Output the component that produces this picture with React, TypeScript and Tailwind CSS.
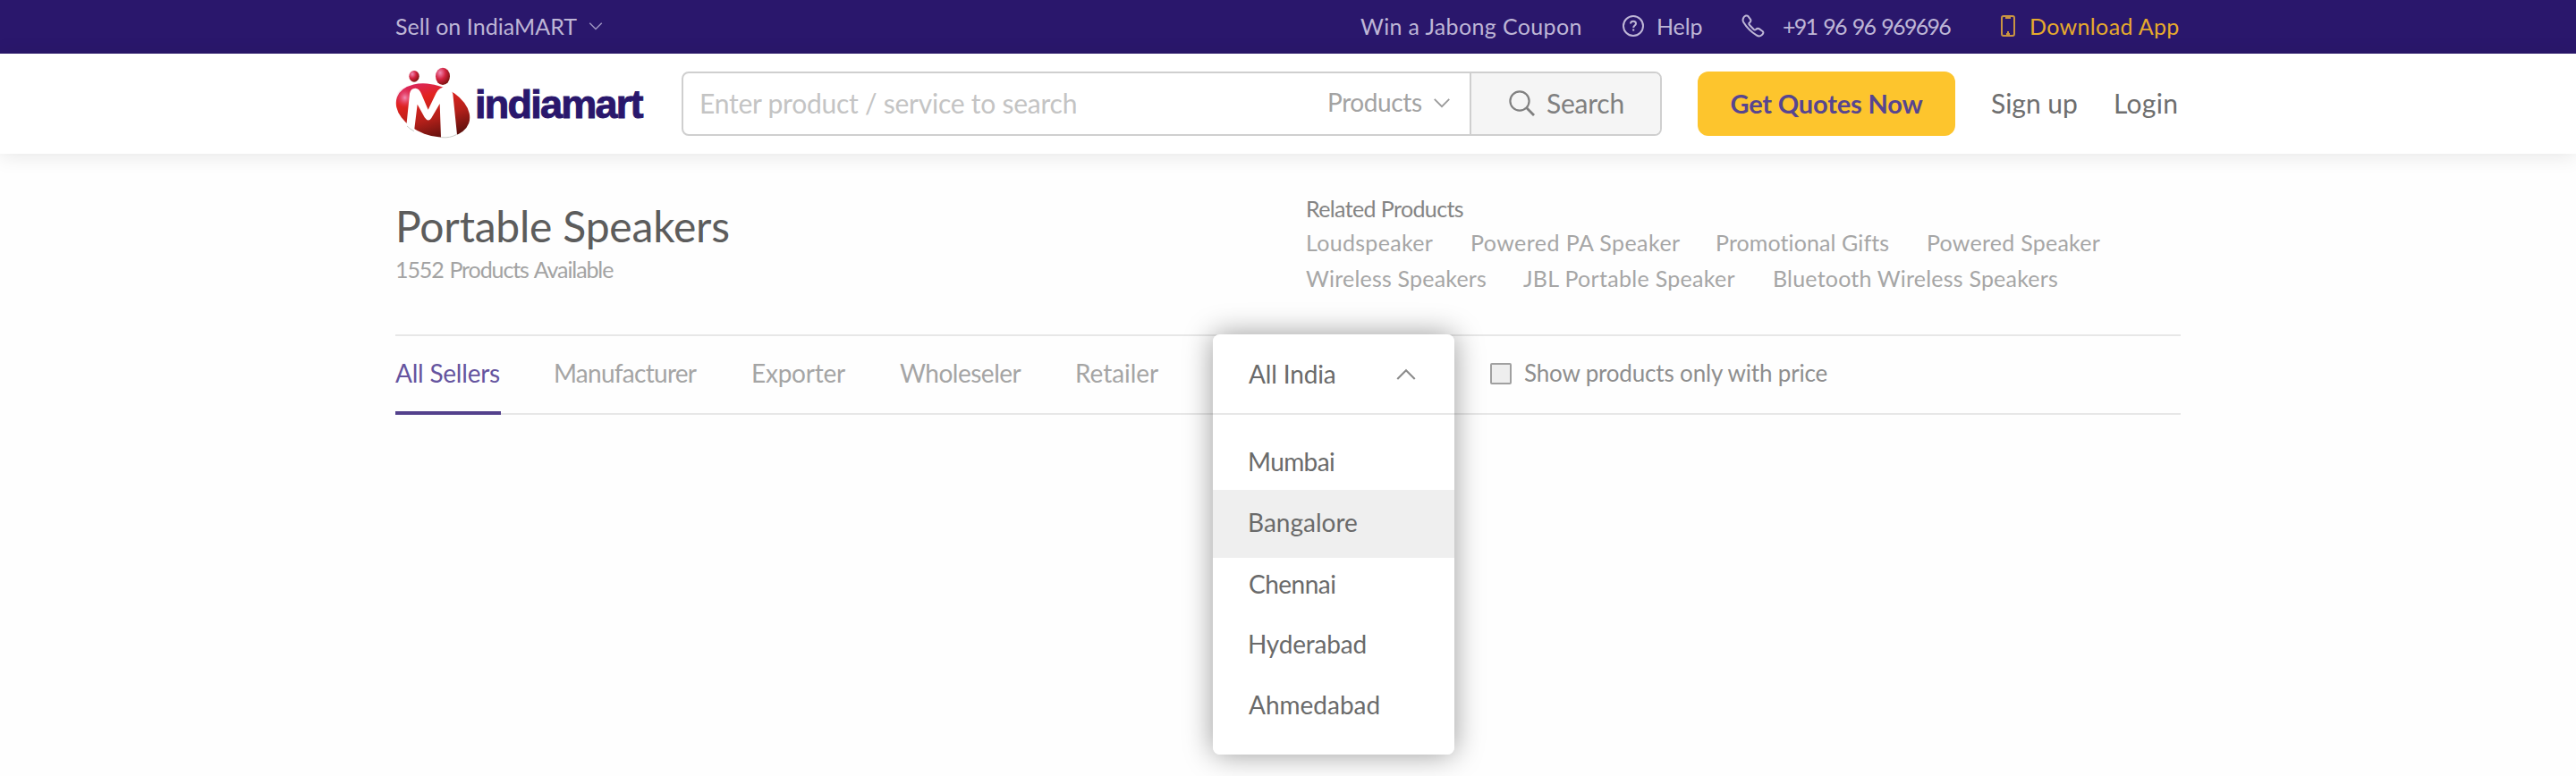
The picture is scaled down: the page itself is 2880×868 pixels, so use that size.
import type { ReactNode } from "react";

function Chevron({ className, up = false }: { className: string; up?: boolean }) {
  return (
    <svg viewBox="0 0 20 12" fill="none" stroke="currentColor" strokeWidth="2" className={className}>
      <path d={up ? "M1 11 L10 2 L19 11" : "M1 1 L10 10 L19 1"} />
    </svg>
  );
}

function Logo() {
  return (
    <svg viewBox="0 0 270 264" className="mb-[4px] h-[88px] w-[90px] shrink-0">
      <defs>
        <linearGradient id="body" x1="0.1" y1="0.1" x2="0.9" y2="0.8">
          <stop offset="0" stopColor="#d9286a" />
          <stop offset="0.3" stopColor="#e2231f" />
          <stop offset="0.65" stopColor="#b3201a" />
          <stop offset="1" stopColor="#5a0f0c" />
        </linearGradient>
        <radialGradient id="glow" cx="0.5" cy="0.5" r="0.5">
          <stop offset="0" stopColor="#f59ac4" stopOpacity="0.9" />
          <stop offset="1" stopColor="#e0306a" stopOpacity="0" />
        </radialGradient>
        <radialGradient id="head" cx="0.32" cy="0.3" r="0.75">
          <stop offset="0" stopColor="#f08bb4" />
          <stop offset="0.5" stopColor="#d2223f" />
          <stop offset="1" stopColor="#7c130f" />
        </radialGradient>
      </defs>
      <ellipse cx="138" cy="160" rx="128" ry="84" transform="rotate(20 138 160)" fill="url(#body)" />
      <ellipse cx="44" cy="118" rx="30" ry="34" fill="url(#glow)" />
      <path
        d="M49 212 L60 104 Q63 86 79 86 Q92 87 98 102 L122 158 L149 102 Q160 82 180 82 Q200 84 205 106 L219 242 Q196 256 165 251 L161 138 L133 186 Q122 202 110 184 L86 140 L75 230 Q62 224 49 212 Z"
        fill="#fff"
      />
      <path d="M51 213 Q62 224 75 230 M166 251 Q196 254 218 241" fill="none" stroke="#c9cdc9" strokeWidth="3" />
      <ellipse cx="75" cy="46" rx="17" ry="19" fill="url(#head)" />
      <ellipse cx="171" cy="46" rx="24" ry="29" fill="url(#head)" />
    </svg>
  );
}

function HelpIcon() {
  return (
    <svg viewBox="0 0 24 24" fill="none" stroke="currentColor" strokeWidth="2" className="ml-[44px] h-6 w-6 shrink-0">
      <circle cx="12" cy="12" r="11" />
      <path d="M9 9.6 C9 7.6 10.4 6.8 12 6.8 C13.7 6.8 15 7.8 15 9.4 C15 11.5 12.2 11.6 12.2 14" />
      <path d="M12.2 15.4 V17.6" />
    </svg>
  );
}

function PhoneIcon() {
  return (
    <svg
      viewBox="0 0 26 26"
      fill="none"
      stroke="currentColor"
      strokeWidth="2"
      strokeLinejoin="round"
      className="ml-[44px] h-[26px] w-[26px] shrink-0"
    >
      <path d="M2.4 3.6 C3.6 1.6 6.2 0.6 7.4 2.2 L10 5.6 C11 7.2 10.4 8.4 8.8 9.6 C8 10.3 8.2 10.9 8.8 11.8 L13.6 16.8 C14.5 17.6 15.2 17.7 16 17 C17.2 15.9 18.6 15.4 20 16.4 L23.6 19 C25 20.2 24.4 21.8 22.6 23.2 C20.8 24.8 18.6 24.6 16.8 23.4 C10.6 19.6 5.4 14.2 2.2 8.8 C1.2 7 1.4 5.2 2.4 3.6 Z" />
    </svg>
  );
}

function MobileIcon() {
  return (
    <svg viewBox="0 0 16 24" fill="none" stroke="currentColor" strokeWidth="2" className="ml-[56px] h-6 w-4 shrink-0 text-[#c99442]">
      <rect x="1" y="1" width="14" height="22" rx="2" />
      <path d="M5 3 H11 M8 18 V22 M6 21 H10" />
    </svg>
  );
}

function SearchIcon() {
  return (
    <svg viewBox="0 0 29 29" fill="none" stroke="currentColor" strokeWidth="2.2" className="ml-[42px] h-[29px] w-[29px] shrink-0">
      <circle cx="12" cy="12" r="10.6" />
      <path d="M19.6 19.6 L28 28" strokeWidth="2.8" />
    </svg>
  );
}

function Text({ className, children }: { className: string; children: ReactNode }) {
  return <span className={`block shrink-0 leading-none whitespace-nowrap ${className}`}>{children}</span>;
}

function TopBar() {
  return (
    <div className="flex h-[60px] justify-center bg-[#2a176c] text-[25px] text-[#beb6d6]">
      <div className="flex h-[58px] w-[1996px] items-center">
        <Text className="w-[203px] tracking-[0.05px]">Sell on IndiaMART</Text>
        <Chevron className="ml-[13px] h-[9px] w-4 text-[#9d94c2]" />
        <Text className="ml-[847px] w-[249px] tracking-[0.36px]">Win a Jabong Coupon</Text>
        <HelpIcon />
        <Text className="ml-[14px] w-[51px] tracking-[-0.1px]">Help</Text>
        <PhoneIcon />
        <Text className="ml-[20px] w-[188px] tracking-[-1.7px] [word-spacing:2.2px]">+91 96 96 969696</Text>
        <MobileIcon />
        <Text className="ml-[16px] tracking-[0.36px] text-[#e6aa2c]">Download App</Text>
      </div>
    </div>
  );
}

function Header() {
  return (
    <header className="relative flex h-[112px] justify-center bg-white shadow-[0_2px_22px_rgba(0,0,0,0.1)]">
      <div className="flex w-[1996px] items-center">
        <div className="-ml-[4px] flex h-[88px] w-[324px] items-center">
          <Logo />
          <Text className="ml-[3px] font-['Liberation_Sans',sans-serif] text-[45px] font-bold tracking-[-1.75px] text-[#2a176c] [-webkit-text-stroke:1px_#2a176c]">
            indiamart
          </Text>
        </div>
        <div className="flex h-[72px] w-[1096px] overflow-hidden rounded-lg border-2 border-[#cfcfcf]">
          <div className="flex flex-1 items-center pb-[2px]">
            <Text className="ml-[18px] w-[700px] text-[30px] tracking-[-0.24px] text-[#c4c4c4]">
              Enter product / service to search
            </Text>
            <Text className="ml-[2px] w-[108px] pb-[2px] text-[28px] tracking-[-0.4px] text-[#a3a3a3]">Products</Text>
            <Chevron className="ml-[10px] h-[11px] w-5 text-[#9a9a9a]" />
          </div>
          <div className="flex w-[213px] items-center border-l-2 border-[#cfcfcf] bg-[#f5f5f5] pb-[2px] text-[#808080]">
            <SearchIcon />
            <Text className="ml-[13px] text-[30px] tracking-[-0.22px]">Search</Text>
          </div>
        </div>
        <div className="ml-[40px] flex h-[72px] w-[288px] items-center justify-center rounded-xl bg-[#fdc52d] pb-[2px]">
          <Text className="text-[29px] font-bold tracking-[-0.18px] text-[#574590]">Get Quotes Now</Text>
        </div>
        <Text className="ml-[40px] w-[98px] pb-[2px] text-[30px] text-[#6e6e6e]">Sign up</Text>
        <Text className="ml-[39px] pb-[2px] text-[30px] tracking-[0.3px] text-[#6e6e6e]">Login</Text>
      </div>
    </header>
  );
}

function Heading() {
  return (
    <section className="flex h-[202px] justify-between">
      <div className="pt-[57px]">
        <Text className="text-[48px] tracking-[-0.2px] text-[#5c5c5c]">Portable Speakers</Text>
        <Text className="mt-[12px] text-[25px] tracking-[-1.1px] text-[#a3a3a3] [word-spacing:1.5px]">1552 Products Available</Text>
      </div>
      <div className="w-[978px] pt-[49px] text-[25px] text-[#a6a6a6]">
        <Text className="tracking-[-0.62px] text-[#848484]">Related Products</Text>
        <div className="mt-[13px] flex">
          <Text className="w-[184px] tracking-[0.3px]">Loudspeaker</Text>
          <Text className="w-[274px] tracking-[0.44px]">Powered PA Speaker</Text>
          <Text className="w-[236px] tracking-[0.1px]">Promotional Gifts</Text>
          <Text className="tracking-[0.25px]">Powered Speaker</Text>
        </div>
        <div className="mt-[15px] flex">
          <Text className="w-[243px] tracking-[0.2px]">Wireless Speakers</Text>
          <Text className="w-[279px] tracking-[0.3px]">JBL Portable Speaker</Text>
          <Text className="tracking-[0.2px]">Bluetooth Wireless Speakers</Text>
        </div>
      </div>
    </section>
  );
}

function LocationMenu() {
  return (
    <div className="absolute -top-[2px] left-[914px] h-[470px] w-[270px] overflow-hidden rounded-lg bg-white text-[28px] text-[#6a6a6a]">
      <div className="flex h-[90px] items-center justify-between border-b-2 border-[#e7e7e7] pr-[43px] pl-[40px]">
        <Text className="tracking-[-0.15px]">All India</Text>
        <Chevron up className="h-[13px] w-[22px] text-[#8c8c8c]" />
      </div>
      <div className="pt-[18px]">
        <Text className="flex h-[66px] items-center pt-[2px] pl-[39px] tracking-[-0.6px]">Mumbai</Text>
        <Text className="flex h-[76px] items-center bg-[#efefef] pb-[4px] pl-[39px]">Bangalore</Text>
        <Text className="flex h-[62px] items-center pb-[4px] pl-[40px] tracking-[-0.5px]">Chennai</Text>
        <Text className="flex h-[68px] items-center pl-[39px] tracking-[-0.2px]">Hyderabad</Text>
        <Text className="flex h-[68px] items-center pl-[40px]">Ahmedabad</Text>
      </div>
    </div>
  );
}

function Filters() {
  return (
    <section className="relative flex h-[90px] border-y-2 border-[#e7e7e7] text-[28px] text-[#a5a5a5]">
      <div className="flex h-[88px] w-[118px] shrink-0 items-center border-b-4 border-[#53418c] text-[#65549f]">
        <Text className="pb-[3px] tracking-[-0.22px]">All Sellers</Text>
      </div>
      <div className="flex h-[81px] items-center">
        <Text className="ml-[59px] w-[161px] tracking-[-0.72px]">Manufacturer</Text>
        <Text className="ml-[60px] w-[106px] tracking-[-0.23px]">Exporter</Text>
        <Text className="ml-[60px] w-[137px] tracking-[-0.5px]">Wholeseler</Text>
        <Text className="ml-[59px] w-[94px] tracking-[-0.07px]">Retailer</Text>
        <span className="mt-[3px] ml-[370px] h-6 w-6 shrink-0 rounded-[2px] border-2 border-[#a0a0a0] bg-[#eeeeee]" />
        <Text className="ml-[14px] pt-[1px] text-[26px] tracking-[-0.17px] text-[#8e8e8e]">Show products only with price</Text>
      </div>
      <div className="absolute -top-[2px] left-[914px] h-[470px] w-[270px] rounded-lg shadow-[0_0_32px_rgba(0,0,0,0.4)]" />
      <LocationMenu />
    </section>
  );
}

export default function App() {
  return (
    <div className="h-[868px] w-[2880px] overflow-hidden bg-[#fefefe] font-[Lato,sans-serif]">
      <TopBar />
      <Header />
      <main className="mx-auto w-[1996px]">
        <Heading />
        <Filters />
      </main>
    </div>
  );
}
